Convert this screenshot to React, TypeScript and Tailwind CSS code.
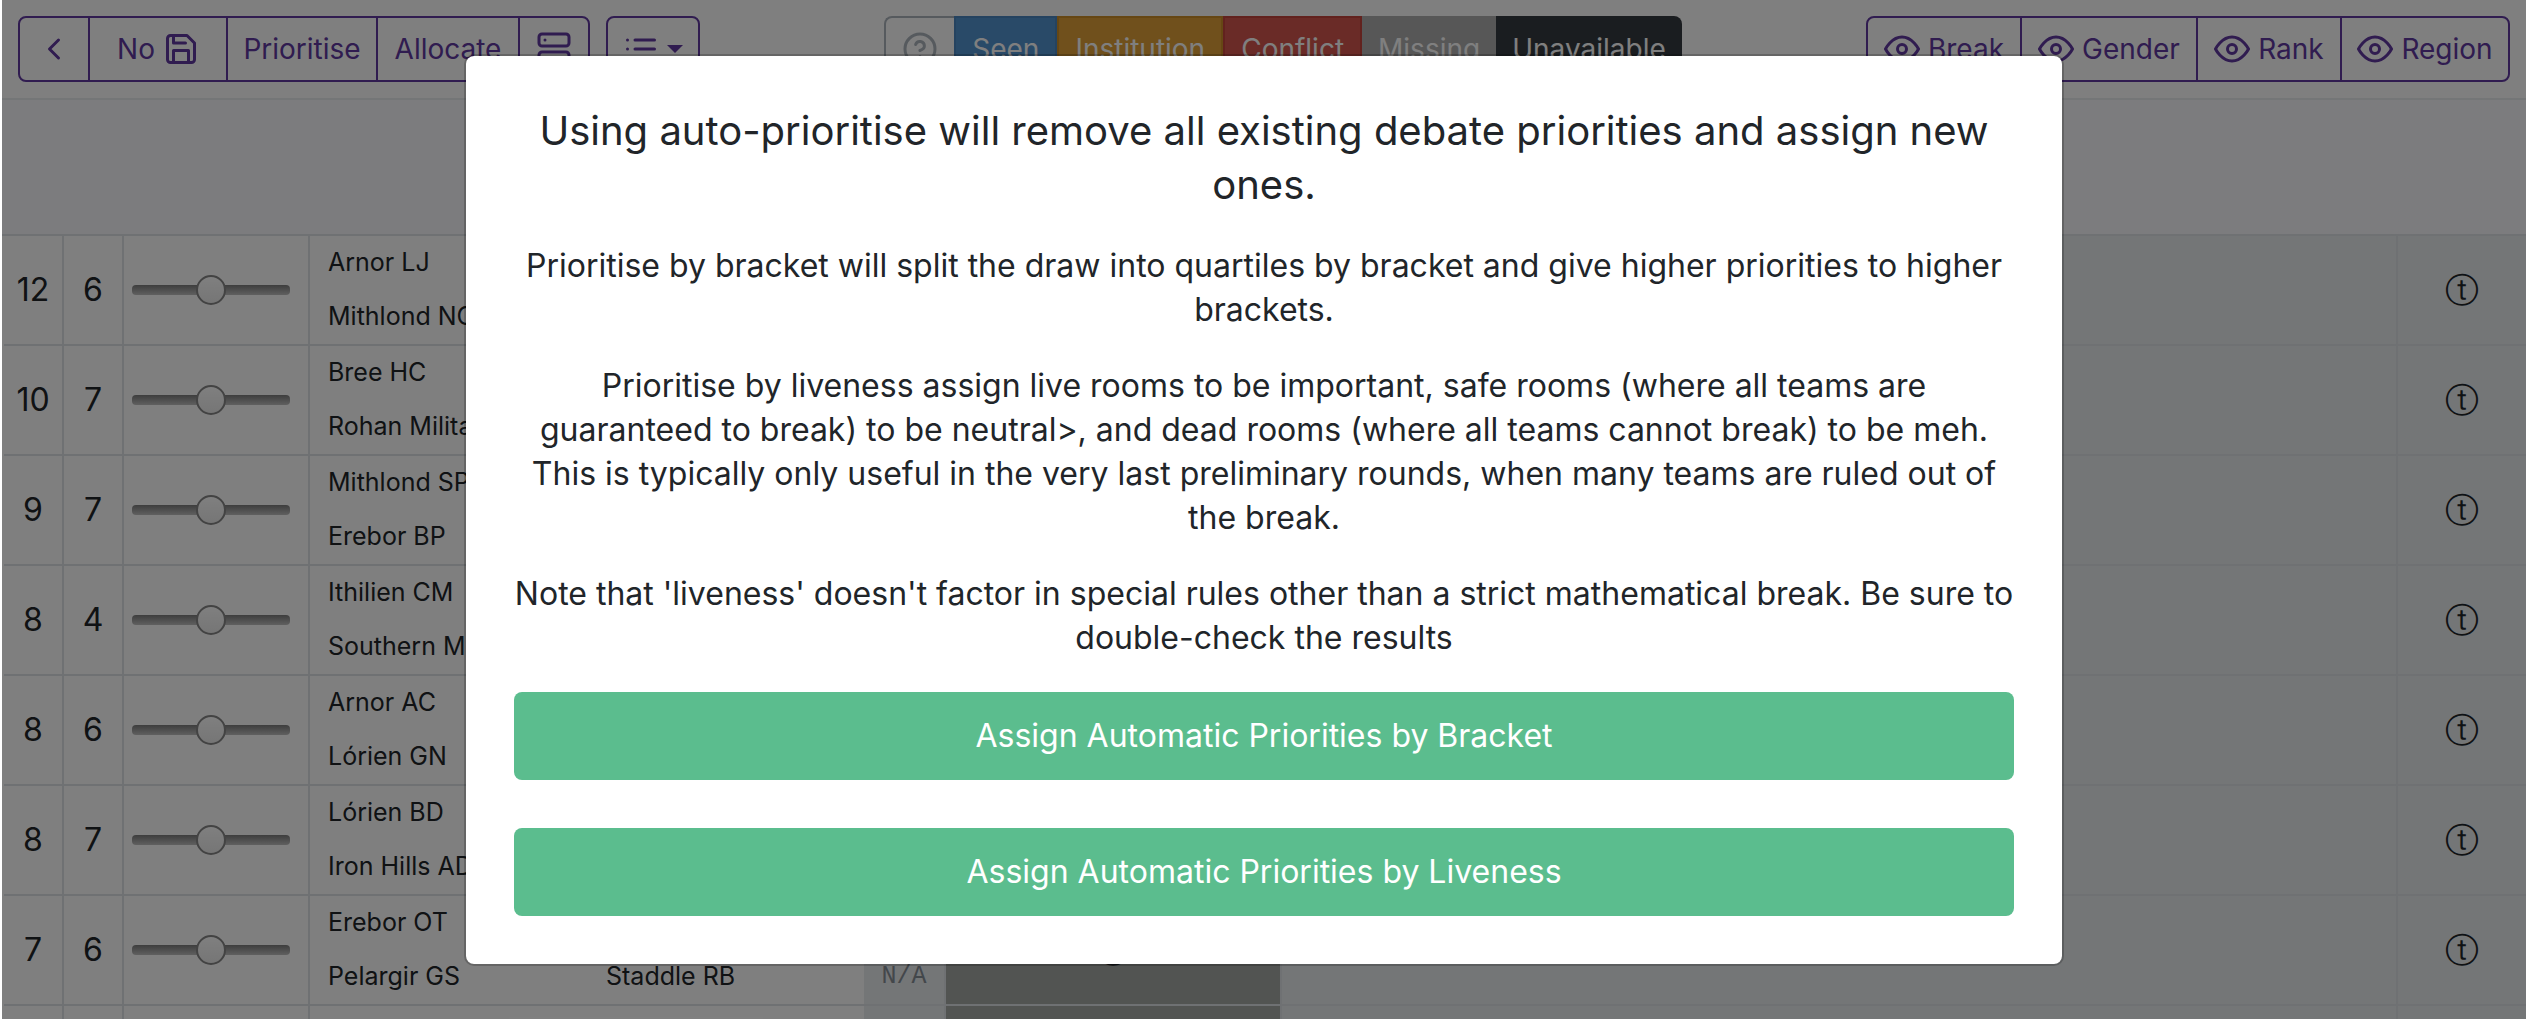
import React from "react";
import { FiChevronLeft, FiEye, FiHelpCircle, FiList, FiSave, FiServer } from "react-icons/fi";

type Debate = {
  id: number;
  bracket: number;
  liveness: number;
  teams: [string, string, string, string];
};

const debates: Debate[] = [
  { id: 1, bracket: 12, liveness: 6, teams: ["Arnor LJ", "", "Mithlond NC", ""] },
  { id: 2, bracket: 10, liveness: 7, teams: ["Bree HC", "", "Rohan Military", ""] },
  { id: 3, bracket: 9, liveness: 7, teams: ["Mithlond SP", "", "Erebor BP", ""] },
  { id: 4, bracket: 8, liveness: 4, teams: ["Ithilien CM", "", "Southern M", ""] },
  { id: 5, bracket: 8, liveness: 6, teams: ["Arnor AC", "", "Lórien GN", ""] },
  { id: 6, bracket: 8, liveness: 7, teams: ["Lórien BD", "", "Iron Hills AD", ""] },
  { id: 7, bracket: 7, liveness: 6, teams: ["Erebor OT", "", "Pelargir GS", "Staddle RB"] },
  { id: 8, bracket: 7, liveness: 6, teams: ["", "", "", ""] },
];

const groupClass =
  "flex h-[66px] items-stretch divide-x-2 divide-[#6038a0] rounded-[8px] border-2 border-[#6038a0] text-[#6038a0]";
const buttonClass = "flex items-center justify-center gap-2 whitespace-nowrap";

const highlights = [
  { label: "Seen", style: "border-2 border-[#4a86c0] bg-[#5294d0]" },
  { label: "Institution", style: "border-2 border-[#cc8e28] bg-[#e0a038]" },
  { label: "Conflict", style: "border-2 border-[#c4443c] bg-[#d4564e]" },
  { label: "Missing", style: "bg-[#aeaeae]" },
  { label: "Unavailable", style: "rounded-r-[8px] bg-[#343a40]" },
];

const overlays = [
  { label: "Break", width: "w-[154px]" },
  { label: "Gender", width: "w-[176px]" },
  { label: "Rank", width: "w-[144px]" },
  { label: "Region", width: "w-[166px]" },
];

function Toolbar() {
  return (
    <nav className="flex h-[100px] items-start justify-between border-b-2 border-[#e9ecef] bg-white px-4 pt-4 text-[28px]">
      <div className="flex gap-4">
        <div className={groupClass}>
          <button className={`${buttonClass} w-[70px]`} aria-label="Back">
            <FiChevronLeft size={36} />
          </button>
          <button className={`${buttonClass} w-[138px]`}>
            No <FiSave size={36} />
          </button>
          <button className={`${buttonClass} w-[150px]`}>Prioritise</button>
          <button className={`${buttonClass} w-[142px]`}>Allocate</button>
          <button className={`${buttonClass} w-[68px]`} aria-label="Shard">
            <FiServer size={36} />
          </button>
        </div>
        <div className={groupClass}>
          <button className={`${buttonClass} w-[90px]`} aria-label="Sort">
            <FiList size={36} />
            <span className="border-x-8 border-t-8 border-x-transparent border-t-[#6038a0]" />
          </button>
        </div>
      </div>
      <div className="flex h-[66px] items-stretch text-white">
        <button
          className="flex w-[70px] items-center justify-center rounded-l-[8px] border-2 border-r-0 border-[#adb5bd] text-[#adb5bd]"
          aria-label="Help"
        >
          <FiHelpCircle size={36} />
        </button>
        {highlights.map((h) => (
          <button key={h.label} className={`px-4 ${h.style}`}>
            {h.label}
          </button>
        ))}
      </div>
      <div className={groupClass}>
        {overlays.map((o) => (
          <button key={o.label} className={`${buttonClass} ${o.width}`}>
            <FiEye size={36} />
            {o.label}
          </button>
        ))}
      </div>
    </nav>
  );
}

const cell = "border-b-2 border-[#dee2e6] p-0";
const symbol = "text-center text-[34px] leading-none";

function TeamPair({ names }: { names: string[] }) {
  return (
    <>
      {names.map((name, i) => (
        <div key={i} className="flex h-[54px] items-center pl-[18px] whitespace-nowrap">
          {name}
        </div>
      ))}
    </>
  );
}

function DebateRow({ debate }: { debate: Debate }) {
  const [a, b, c, d] = debate.teams;
  return (
    <tr className="h-[110px]">
      <td className={`${cell} border-r-2 text-center text-[32px]`}>{debate.bracket}</td>
      <td className={`${cell} border-r-2 text-center text-[32px]`}>{debate.liveness}</td>
      <td className={`${cell} border-r-2`}>
        <input
          type="range"
          min={-2}
          max={2}
          defaultValue={0}
          aria-label={`Priority of debate ${debate.id}`}
          className="ml-2 block h-[30px] w-[158px] appearance-none bg-transparent [&::-webkit-slider-runnable-track]:h-[10px] [&::-webkit-slider-runnable-track]:rounded-[4px] [&::-webkit-slider-runnable-track]:bg-linear-to-b [&::-webkit-slider-runnable-track]:from-[#7c7c7c] [&::-webkit-slider-runnable-track]:to-[#c0c0c0] [&::-webkit-slider-thumb]:-mt-[10px] [&::-webkit-slider-thumb]:size-[30px] [&::-webkit-slider-thumb]:appearance-none [&::-webkit-slider-thumb]:rounded-full [&::-webkit-slider-thumb]:border-2 [&::-webkit-slider-thumb]:border-[#868686] [&::-webkit-slider-thumb]:bg-linear-to-b [&::-webkit-slider-thumb]:from-white [&::-webkit-slider-thumb]:to-[#ececec]"
        />
      </td>
      <td className={cell}>
        <TeamPair names={[a, c]} />
      </td>
      <td className={cell}>
        <TeamPair names={[b, d]} />
      </td>
      <td className={`${cell} border-r-2 bg-[#e9ecef] font-['Liberation_Mono',monospace] text-[#868e96]`}>
        <div className="flex h-[54px] items-center justify-center">N/A</div>
        <div className="flex h-[54px] items-center justify-center">N/A</div>
      </td>
      <td className={`${cell} ${symbol} border-r-2 bg-[#a5a8a5]`}>ⓣ</td>
      <td className={`${cell} border-r-2 bg-[#e9ecef]`} />
      <td className={`${cell} ${symbol} bg-[#e9ecef]`}>ⓣ</td>
    </tr>
  );
}

function PriorityModal() {
  const paragraph = "text-[32px] leading-[44px]";
  const action = "h-[88px] w-full rounded-[8px] bg-[#5bbd8e] text-[32px] text-white";
  return (
    <div className="absolute inset-0 left-[2px] bg-black/50">
      <div
        role="dialog"
        aria-modal="true"
        aria-labelledby="modal-title"
        className="mx-auto mt-[54px] w-full max-w-[1600px] rounded-[10px] border-2 border-black/20 bg-white bg-clip-padding p-12 text-center"
      >
        <div className="flex flex-col gap-8">
          <h4 id="modal-title" className="text-[40px] leading-[54px]">
            Using auto-prioritise will remove all existing debate priorities and assign new ones.
          </h4>
          <p className={paragraph}>
            Prioritise by bracket will split the draw into quartiles by bracket and give higher priorities to
            higher brackets.
          </p>
          <p className={paragraph}>
            Prioritise by liveness assign live rooms to be important, safe rooms (where all teams are guaranteed
            to break) to be neutral&gt;, and dead rooms (where all teams cannot break) to be meh. This is
            typically only useful in the very last preliminary rounds, when many teams are ruled out of the break.
          </p>
          <p className={paragraph}>
            Note that 'liveness' doesn't factor in special rules other than a strict mathematical break. Be sure
            to double-check the results
          </p>
          <button className={action}>Assign Automatic Priorities by Bracket</button>
        </div>
        <button className={`${action} mt-12 block`}>Assign Automatic Priorities by Liveness</button>
      </div>
    </div>
  );
}

export default function App() {
  return (
    <div className="relative h-screen overflow-hidden bg-white pl-[2px] font-['Inter',sans-serif] text-[#212529]">
      <Toolbar />
      <div className="h-[136px] border-b-2 border-[#dee2e6] bg-[#f8f9fd]" />
      <div className="pl-[2px]">
        <table className="w-full table-fixed border-separate border-spacing-0 text-[25px]">
          <colgroup>
            <col className="w-[60px]" />
            <col className="w-[60px]" />
            <col className="w-[186px]" />
            <col className="w-[278px]" />
            <col className="w-[276px]" />
            <col className="w-[82px]" />
            <col className="w-[336px]" />
            <col />
            <col className="w-[128px]" />
          </colgroup>
          <tbody>
            {debates.map((d) => (
              <DebateRow key={d.id} debate={d} />
            ))}
          </tbody>
        </table>
      </div>
      <PriorityModal />
    </div>
  );
}
